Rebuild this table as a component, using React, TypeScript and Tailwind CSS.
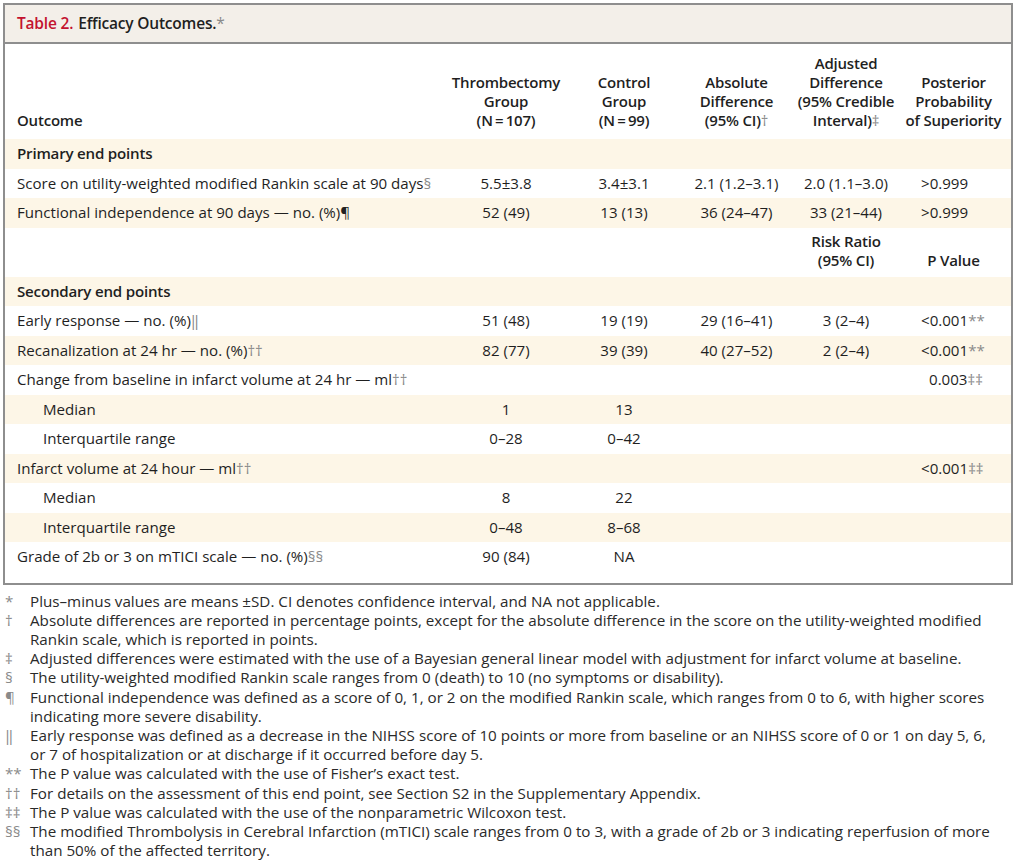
import React from "react";

type Row =
  | { kind: "section"; label: string }
  | { kind: "sub" }
  | {
      kind: "data";
      label: string;
      mark?: string;
      markDark?: boolean;
      indent?: boolean;
      v: string[];
      p?: string;
      pMark?: string;
      pShift?: boolean;
    };

const rows: Row[] = [
  { kind: "section", label: "Primary end points" },
  {
    kind: "data",
    label: "Score on utility-weighted modified Rankin scale at 90 days",
    mark: "§",
    v: ["5.5±3.8", "3.4±3.1", "2.1 (1.2–3.1)", "2.0 (1.1–3.0)"],
    p: ">0.999",
  },
  {
    kind: "data",
    label: "Functional independence at 90 days — no. (%)",
    mark: "¶",
    markDark: true,
    v: ["52 (49)", "13 (13)", "36 (24–47)", "33 (21–44)"],
    p: ">0.999",
  },
  { kind: "sub" },
  { kind: "section", label: "Secondary end points" },
  {
    kind: "data",
    label: "Early response — no. (%)",
    mark: "‖",
    v: ["51 (48)", "19 (19)", "29 (16–41)", "3 (2–4)"],
    p: "<0.001",
    pMark: "**",
  },
  {
    kind: "data",
    label: "Recanalization at 24 hr — no. (%)",
    mark: "††",
    v: ["82 (77)", "39 (39)", "40 (27–52)", "2 (2–4)"],
    p: "<0.001",
    pMark: "**",
  },
  {
    kind: "data",
    label: "Change from baseline in infarct volume at 24 hr — ml",
    mark: "††",
    v: ["", "", "", ""],
    p: "0.003",
    pMark: "‡‡",
    pShift: true,
  },
  { kind: "data", label: "Median", indent: true, v: ["1", "13", "", ""] },
  { kind: "data", label: "Interquartile range", indent: true, v: ["0–28", "0–42", "", ""] },
  {
    kind: "data",
    label: "Infarct volume at 24 hour — ml",
    mark: "††",
    v: ["", "", "", ""],
    p: "<0.001",
    pMark: "‡‡",
  },
  { kind: "data", label: "Median", indent: true, v: ["8", "22", "", ""] },
  { kind: "data", label: "Interquartile range", indent: true, v: ["0–48", "8–68", "", ""] },
  {
    kind: "data",
    label: "Grade of 2b or 3 on mTICI scale — no. (%)",
    mark: "§§",
    v: ["90 (84)", "NA", "", ""],
  },
];

const notes: { m: string; lines: string[] }[] = [
  { m: "*", lines: ["Plus–minus values are means ±SD. CI denotes confidence interval, and NA not applicable."] },
  {
    m: "†",
    lines: [
      "Absolute differences are reported in percentage points, except for the absolute difference in the score on the utility-weighted modified",
      "Rankin scale, which is reported in points.",
    ],
  },
  { m: "‡", lines: ["Adjusted differences were estimated with the use of a Bayesian general linear model with adjustment for infarct volume at baseline."] },
  { m: "§", lines: ["The utility-weighted modified Rankin scale ranges from 0 (death) to 10 (no symptoms or disability)."] },
  {
    m: "¶",
    lines: [
      "Functional independence was defined as a score of 0, 1, or 2 on the modified Rankin scale, which ranges from 0 to 6, with higher scores",
      "indicating more severe disability.",
    ],
  },
  {
    m: "‖",
    lines: [
      "Early response was defined as a decrease in the NIHSS score of 10 points or more from baseline or an NIHSS score of 0 or 1 on day 5, 6,",
      "or 7 of hospitalization or at discharge if it occurred before day 5.",
    ],
  },
  { m: "**", lines: ["The P value was calculated with the use of Fisher’s exact test."] },
  { m: "††", lines: ["For details on the assessment of this end point, see Section S2 in the Supplementary Appendix."] },
  { m: "‡‡", lines: ["The P value was calculated with the use of the nonparametric Wilcoxon test."] },
  {
    m: "§§",
    lines: [
      "The modified Thrombolysis in Cerebral Infarction (mTICI) scale ranges from 0 to 3, with a grade of 2b or 3 indicating reperfusion of more",
      "than 50% of the affected territory.",
    ],
  },
];

const grid = "grid grid-cols-[442px_118px_118px_107px_112px_1fr]";

function Mark({ children, dark }: { children: React.ReactNode; dark?: boolean }) {
  return <span className={dark ? "text-[#222]" : "text-[#8a8a8a] font-normal"}>{children}</span>;
}

export default function App() {
  let stripe = 0;
  return (
    <div className="min-h-screen bg-white pt-[3px] pl-[3px] text-[#1f1f1f] [font-family:'Open_Sans','Noto_Sans',sans-serif]">
      <div className="w-[1010px] border-2 border-[#8e8e8e]">
        {/* title bar */}
        <div className="flex h-[39px] items-center border-b-2 border-[#8e8e8e] bg-[#f3efe9] pl-[12px] text-[15.5px] font-semibold tracking-[-0.2px]">
          <span className="text-[#c3122f]">Table 2.</span>
          <span className="ml-[5px]">Efficacy Outcomes.</span>
          <Mark>*</Mark>
        </div>

        {/* column headers */}
        <div className={`${grid} h-[95px] items-end pb-[9px] text-[15px] font-semibold leading-[19px] tracking-[-0.2px]`}>
          <div className="pl-[12px]">Outcome</div>
          <div className="text-center">
            Thrombectomy
            <br />
            Group
            <br />
            (N{"\u2009"}={"\u2009"}107)
          </div>
          <div className="text-center">
            Control
            <br />
            Group
            <br />
            (N{"\u2009"}={"\u2009"}99)
          </div>
          <div className="text-center">
            Absolute
            <br />
            Difference
            <br />
            (95% CI)<Mark>†</Mark>
          </div>
          <div className="text-center">
            Adjusted
            <br />
            Difference
            <br />
            (95% Credible
            <br />
            Interval)<Mark>‡</Mark>
          </div>
          <div className="pr-[6px] text-center">
            Posterior
            <br />
            Probability
            <br />
            of Superiority
          </div>
        </div>

        {/* body */}
        <div className="pb-[11px] text-[15.1px]">
          {rows.map((r, i) => {
            const bg = stripe++ % 2 === 0 ? "bg-[#fdf6e7]" : "bg-white";
            if (r.kind === "section") {
              return (
                <div key={i} className={`${bg} flex h-[29.5px] items-center pl-[12px] font-semibold tracking-[-0.2px]`}>
                  {r.label}
                </div>
              );
            }
            if (r.kind === "sub") {
              return (
                <div key={i} className={`${grid} ${bg} h-[49px] items-end pb-[6px] font-semibold leading-[19.5px] tracking-[-0.2px]`}>
                  <div />
                  <div />
                  <div />
                  <div />
                  <div className="text-center">
                    Risk Ratio
                    <br />
                    (95% CI)
                  </div>
                  <div className="pr-[6px] text-center">P Value</div>
                </div>
              );
            }
            return (
              <div key={i} className={`${grid} ${bg} h-[29.5px] items-center whitespace-nowrap`}>
                <div className={r.indent ? "pl-[38px]" : "pl-[12px]"}>
                  {r.label}
                  {r.mark && <Mark dark={r.markDark}>{r.mark}</Mark>}
                </div>
                {r.v.map((v, j) => (
                  <div key={j} className="text-center">
                    {v}
                  </div>
                ))}
                <div className={r.pShift ? "pl-[27px]" : "pl-[19px]"}>
                  {r.p}
                  {r.pMark && <Mark>{r.pMark}</Mark>}
                </div>
              </div>
            );
          })}
        </div>
      </div>

      {/* footnotes */}
      <div className="mt-[7px] text-[15.2px] leading-[19.2px] text-[#2a2a2a]">
        {notes.map((n, i) => (
          <div key={i} className="flex whitespace-nowrap">
            <div className="w-[27px] shrink-0 pl-[2px] text-[#8a8a8a]">{n.m}</div>
            <div>
              {n.lines.map((l, k) => (
                <div key={k}>{l}</div>
              ))}
            </div>
          </div>
        ))}
      </div>
    </div>
  );
}
